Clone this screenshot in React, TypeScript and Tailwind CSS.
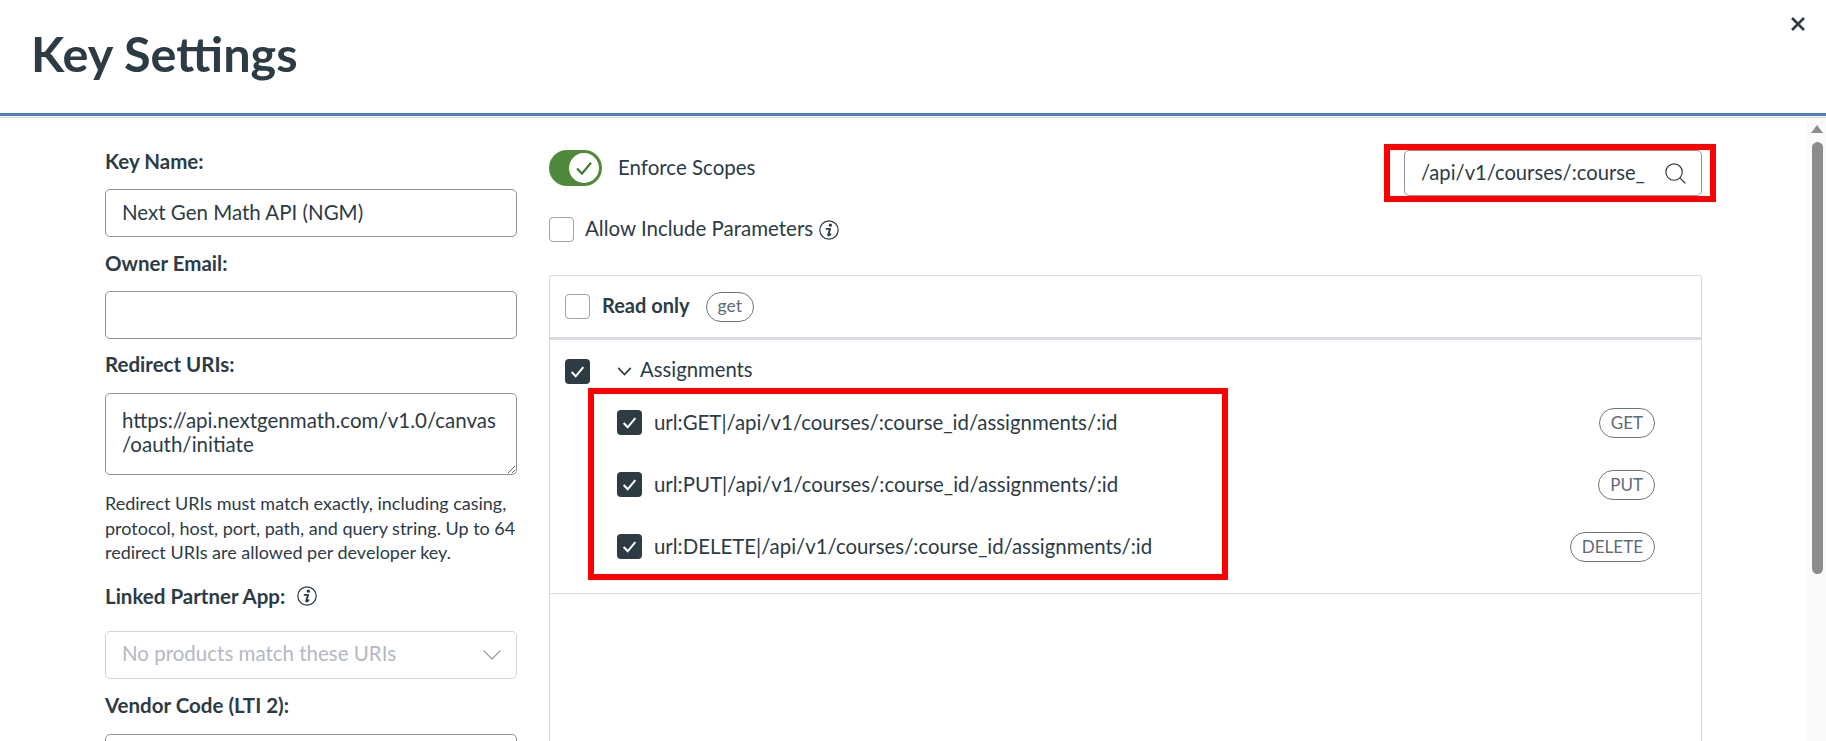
const field = 'w-full rounded-[5px] border border-[#8a929c] bg-white px-[16px] text-[20.5px] text-[#2d3b45]'
const label = 'h-6 text-[20.5px] leading-6 font-bold text-[#2d3b45]'

const routes = ['GET', 'PUT', 'DELETE']

function InfoIcon({ className }: { className: string }) {
  return (
    <svg viewBox="0 0 20 20" className={className} fill="none">
      <circle cx="10" cy="10" r="9.2" stroke="#2d3b45" strokeWidth="1.2" />
      <circle cx="11.4" cy="5.2" r="1.6" fill="#2d3b45" />
      <path d="M7.6 8.9h3.5l-1.9 6c-.1.5.4.7.9.4l1.4-1" stroke="#2d3b45" strokeWidth="1.9" strokeLinejoin="round" strokeLinecap="round" />
    </svg>
  )
}

function Checkbox({ checked }: { checked?: boolean }) {
  if (checked) {
    return (
      <div className="flex h-[25px] w-[25px] shrink-0 items-center justify-center rounded-[4px] bg-[#2d3b45]">
        <svg viewBox="0 0 16 16" className="h-[17px] w-[17px]" fill="none">
          <path d="M2.5 8.5 6.3 12.5 13.5 3.8" stroke="#fff" strokeWidth="1.9" />
        </svg>
      </div>
    )
  }
  return <div className="h-[25px] w-[25px] shrink-0 rounded-[4px] border border-[#9aa2ab] bg-white" />
}

function Pill({ text }: { text: string }) {
  return (
    <div className="flex h-[30px] items-center rounded-full border border-[#6b7780] px-[11px] text-[17px] text-[#5f6b78]">
      {text}
    </div>
  )
}

export default function App() {
  return (
    <div className="flex h-[741px] w-[1826px] flex-col overflow-hidden bg-white font-['Lato',sans-serif] text-[#2d3b45]">
      <div className="h-[118px] shrink-0 border-b border-[#d7dade]">
        <div className="flex h-[116px] justify-between border-b-[3px] border-[#4f7dc2]">
          <h1 className="mt-[22px] ml-[31px] text-[48.6px] leading-[62px] font-bold">Key Settings</h1>
          <svg viewBox="0 0 14 14" className="mt-[17px] mr-[21px] h-[14px] w-[14px]" fill="none">
            <path d="M1 1 13 13M13 1 1 13" stroke="#2d3b45" strokeWidth="2.6" />
          </svg>
        </div>
      </div>

      <div className="flex min-h-0 flex-1">
        <div className="ml-[105px] w-[412px] shrink-0 pt-[31px]">
          <div className={label}>Key Name:</div>
          <div className={`${field} mt-[16px] flex h-[48px] items-center pb-[2px]`}>Next Gen Math API (NGM)</div>
          <div className={`${label} mt-[14px]`}>Owner Email:</div>
          <div className={`${field} mt-[16px] h-[48px]`} />
          <div className={`${label} mt-[13px]`}>Redirect URIs:</div>
          <textarea
            readOnly
            className={`${field} mt-[17px] block h-[82px] pt-[14px] leading-6`}
            defaultValue={'https://api.nextgenmath.com/v1.0/canvas\n/oauth/initiate'}
          />
          <p className="mt-[16px] text-[18px] leading-[24.5px] text-[#2d3b45]">
            Redirect URIs must match exactly, including casing, protocol, host, port, path, and query string. Up to 64
            redirect URIs are allowed per developer key.
          </p>
          <div className={`${label} mt-[19px] flex items-center gap-[12px]`}>
            Linked Partner App:
            <InfoIcon className="h-[20px] w-[20px]" />
          </div>
          <div className="mt-[23px] flex h-[48px] items-center justify-between rounded-[5px] border border-[#d0d4d9] pr-[15px] pl-[16px] text-[20.5px] text-[#b4b9bf]">
            <span className="-mt-[2px]">No products match these URIs</span>
            <svg viewBox="0 0 18 10" className="h-[10px] w-[18px]" fill="none">
              <path d="M.7.7 9 9 17.3.7" stroke="#8a929c" strokeWidth="1.2" />
            </svg>
          </div>
          <div className={`${label} mt-[14px]`}>Vendor Code (LTI 2):</div>
          <div className={`${field} mt-[17px] h-[48px]`} />
        </div>

        <div className="ml-[32px] flex w-[1153px] shrink-0 flex-col pt-[32px]">
          <div className="flex h-[36px] items-start justify-between">
            <div className="flex items-center gap-[16px]">
              <div className="flex h-[36px] w-[53px] items-center justify-end rounded-full bg-[#4f8a3c] pr-[3px]">
                <div className="flex h-[30px] w-[30px] items-center justify-center rounded-full bg-white">
                  <svg viewBox="0 0 18 18" className="h-[18px] w-[18px]" fill="none">
                    <path d="M2 9.5 7 14.5 16 3.8" stroke="#3f7f2f" strokeWidth="2.2" />
                  </svg>
                </div>
              </div>
              <span className="-mt-[2px] text-[20.5px]">Enforce Scopes</span>
            </div>
            <div className="relative">
              <div className="flex h-[46px] w-[298px] items-center justify-between rounded-[5px] border border-[#8a929c] pr-[15px] pl-[16px] text-[20.2px]">
                <span className="-mt-[2px]">/api/v1/courses/:course_</span>
                <svg viewBox="0 0 22 22" className="h-[21px] w-[21px]" fill="none">
                  <circle cx="9.5" cy="9.5" r="8.6" stroke="#2d3b45" strokeWidth="1.2" />
                  <path d="M15.8 15.8 21.2 21.2" stroke="#2d3b45" strokeWidth="1.2" />
                </svg>
              </div>
              <div className="absolute -top-[6px] -right-[14px] -bottom-[6px] -left-[20px] border-[6px] border-[#ff0000]" />
            </div>
          </div>

          <div className="mt-[31px] flex h-[25px] items-center gap-[11px]">
            <Checkbox />
            <span className="-mt-[2px] text-[20.5px]">Allow Include Parameters</span>
            <InfoIcon className="-ml-[5px] h-[20px] w-[20px]" />
          </div>

          <div className="mt-[33px] flex min-h-0 flex-1 flex-col rounded-t-[3px] border border-b-0 border-[#d7dade]">
            <div className="flex h-[64px] shrink-0 items-center border-b-[3px] border-[#d7dade] pl-[15px]">
              <Checkbox />
              <span className="-mt-[3px] ml-[12px] text-[20px] font-bold">Read only</span>
              <div className="ml-[16px] flex h-[30px] items-center rounded-full border border-[#6b7780] px-[11px] text-[17.5px] text-[#5f6b78]">
                get
              </div>
            </div>

            <div className="h-[254px] shrink-0 border-b border-[#d7dade] pt-[19px] pr-[46px] pl-[15px]">
              <div className="flex h-[25px] items-center">
                <Checkbox checked />
                <svg viewBox="0 0 16 10" className="ml-[27px] h-[9px] w-[15px]" fill="none">
                  <path d="M1 1 8 8.5 15 1" stroke="#2d3b45" strokeWidth="1.8" />
                </svg>
                <span className="-mt-[4px] ml-[8px] text-[20.3px]">Assignments</span>
              </div>
              <div className="relative flex flex-col gap-[32px] pt-[24px]">
                <div className="absolute top-[4px] left-[23px] h-[192px] w-[640px] border-[6px] border-[#ff0000]" />
                {routes.map((method) => (
                  <div key={method} className="flex h-[30px] items-center justify-between pl-[52px]">
                    <div className="flex items-center gap-[12px]">
                      <Checkbox checked />
                      <span className="-mt-[2px] text-[20.4px]">url:{method}|/api/v1/courses/:course_id/assignments/:id</span>
                    </div>
                    <Pill text={method} />
                  </div>
                ))}
              </div>
            </div>
          </div>
        </div>

        <div className="ml-auto flex w-[19px] shrink-0 flex-col items-center bg-[#fafafa] pt-[7px] pl-[1px]">
          <div className="h-0 w-0 border-x-[6px] border-b-[8px] border-x-transparent border-b-[#8c8c8c]" />
          <div className="mt-[9px] h-[432px] w-[11px] rounded-full bg-[#8c8c8c]" />
        </div>
      </div>
    </div>
  )
}
